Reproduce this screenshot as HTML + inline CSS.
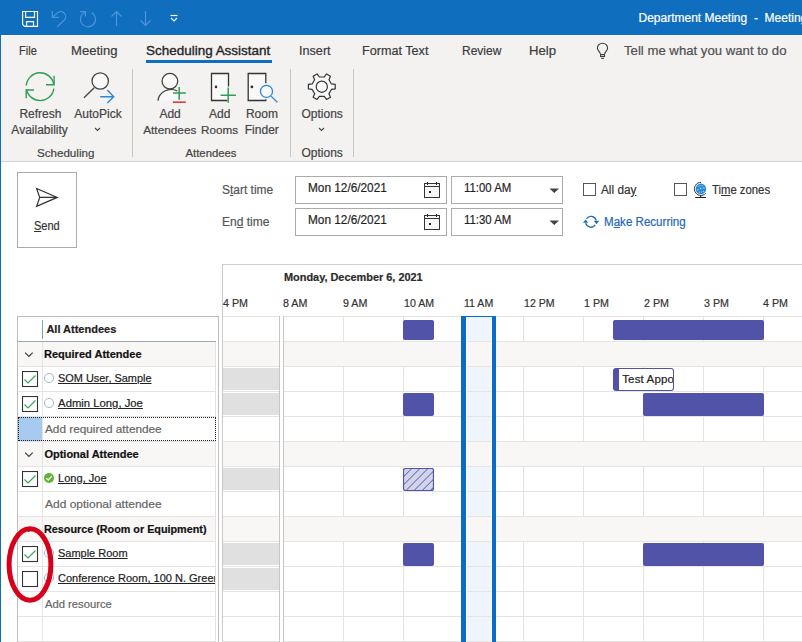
<!DOCTYPE html>
<html><head><meta charset="utf-8"><style>
html,body{margin:0;padding:0;}
body{width:802px;height:642px;overflow:hidden;position:relative;background:#fff;font-family:"Liberation Sans", sans-serif;}
.t{position:absolute;white-space:nowrap;line-height:1;-webkit-text-stroke-width:0.2px;}
.r{position:absolute;}
</style></head><body>
<div class="r" style="left:0px;top:0px;width:802px;height:35px;background:#106EBE"></div><div class="r" style="left:0px;top:35px;width:1px;height:607px;background:#106EBE"></div><div class="r" style="left:1px;top:35px;width:801px;height:126px;background:#F3F2F1"></div><div class="r" style="left:1px;top:161px;width:801px;height:1px;background:#D6D4D2"></div><svg class="r" style="left:0;top:0" width="200" height="35" viewBox="0 0 200 35">
<g fill="none" stroke="#fff" stroke-width="1.15">
<path d="M22.6 11.5 H37.5 V26.4 H24.6 L22.6 24.4 Z"/>
<path d="M25.6 11.5 V17.4 H34.5 V11.5"/>
<path d="M26.6 26.4 V21.6 H33.5 V26.4"/>
</g>
<g fill="none" stroke="#4F93DA" stroke-width="1.2">
<path d="M52.3 11.1 V17.3 H58.8"/>
<path d="M52.6 17 L57.8 12.6 A4.9 4.9 0 0 1 64.2 20 L57.3 26.7"/>
<path d="M84.79 12.31 A7.6 7.6 0 1 0 91.8 12.62"/>
<path d="M80.2 11.6 H85.4 V16.6"/>
<path d="M116.5 26 v-14 M111.5 16.5 l5 -5 l5 5"/>
<path d="M145.5 11 v14 M140.5 20.5 l5 5 l5 -5"/>
</g>
<g fill="none" stroke="#fff" stroke-width="1.2">
<path d="M170.5 15.5 h7"/>
<path d="M171 18 l3 3 l3 -3"/>
</g>
</svg><div class="t" style="left:638.5px;top:12.0px;font-size:12px;color:#fff;font-weight:normal;">Department Meeting&nbsp;&nbsp;-&nbsp;&nbsp;Meeting</div><div class="t" style="left:18.5px;top:44.0px;font-size:13px;color:#3b3b3b;font-weight:normal;transform:scaleX(0.850);transform-origin:0 0;">File</div><div class="t" style="left:70.5px;top:44.0px;font-size:13px;color:#3b3b3b;font-weight:normal;transform:scaleX(1.005);transform-origin:0 0;">Meeting</div><div class="t" style="left:146.0px;top:44.0px;font-size:13px;color:#262626;font-weight:normal;transform:scaleX(1.036);transform-origin:0 0;-webkit-text-stroke-width:0.35px;">Scheduling Assistant</div><div class="r" style="left:146px;top:60px;width:126px;height:3px;background:#106EBE"></div><div class="t" style="left:299.0px;top:44.0px;font-size:13px;color:#3b3b3b;font-weight:normal;transform:scaleX(0.972);transform-origin:0 0;">Insert</div><div class="t" style="left:362.0px;top:44.0px;font-size:13px;color:#3b3b3b;font-weight:normal;transform:scaleX(0.971);transform-origin:0 0;">Format Text</div><div class="t" style="left:461.6px;top:44.0px;font-size:13px;color:#3b3b3b;font-weight:normal;transform:scaleX(0.924);transform-origin:0 0;">Review</div><div class="t" style="left:529.0px;top:44.0px;font-size:13px;color:#3b3b3b;font-weight:normal;transform:scaleX(1.010);transform-origin:0 0;">Help</div><div class="t" style="left:624.3px;top:44.0px;font-size:13px;color:#505050;font-weight:normal;transform:scaleX(1.013);transform-origin:0 0;">Tell me what you want to do</div><svg class="r" style="left:590px;top:38px" width="24" height="26" viewBox="590 38 24 26">
<g fill="none" stroke="#3a3a3a" stroke-width="1.1">
<path d="M600.4 54 C600 51.6 597.4 50.6 597.4 48.3 A5.1 5.1 0 0 1 607.6 48.3 C607.6 50.6 605 51.6 604.6 54"/>
<rect x="600.6" y="54.6" width="3.9" height="1.9"/>
<path d="M601.3 58.4 H603.8"/>
</g></svg><div class="r" style="left:132px;top:69px;width:1px;height:88px;background:#C8C6C4"></div><div class="r" style="left:290px;top:69px;width:1px;height:88px;background:#C8C6C4"></div><div class="r" style="left:353px;top:69px;width:1px;height:88px;background:#C8C6C4"></div><div class="t" style="left:-19.6px;width:120px;text-align:center;top:108px;font-size:12px;color:#444;font-weight:normal">Refresh</div><div class="t" style="left:-20.4px;width:120px;text-align:center;top:124px;font-size:12px;color:#444;font-weight:normal">Availability</div><div class="t" style="left:38.0px;width:120px;text-align:center;top:108px;font-size:12px;color:#444;font-weight:normal">AutoPick</div><div class="t" style="left:5.7px;width:120px;text-align:center;top:147px;font-size:11.6px;color:#444;font-weight:normal">Scheduling</div><div class="t" style="left:110.1px;width:120px;text-align:center;top:108px;font-size:12px;color:#444;font-weight:normal">Add</div><div class="t" style="left:109.8px;width:120px;text-align:center;top:125px;font-size:11.8px;color:#444;font-weight:normal">Attendees</div><div class="t" style="left:159.8px;width:120px;text-align:center;top:108px;font-size:12px;color:#444;font-weight:normal">Add</div><div class="t" style="left:159.5px;width:120px;text-align:center;top:124px;font-size:11.7px;color:#444;font-weight:normal">Rooms</div><div class="t" style="left:201.9px;width:120px;text-align:center;top:108px;font-size:12px;color:#444;font-weight:normal">Room</div><div class="t" style="left:201.8px;width:120px;text-align:center;top:124px;font-size:12px;color:#444;font-weight:normal">Finder</div><div class="t" style="left:151.0px;width:120px;text-align:center;top:148px;font-size:11.3px;color:#444;font-weight:normal">Attendees</div><div class="t" style="left:262.2px;width:120px;text-align:center;top:108px;font-size:12px;color:#444;font-weight:normal">Options</div><div class="t" style="left:262.2px;width:120px;text-align:center;top:147px;font-size:12px;color:#444;font-weight:normal">Options</div><svg class="r" style="left:0;top:60px" width="360" height="80" viewBox="0 60 360 80">
<g fill="none" stroke="#2F9E52" stroke-width="1.4">
<path d="M26.25 85.49 A13.9 13.9 0 0 1 53.79 84.29"/>
<path d="M46 84.7 H54.1 V75.7"/>
<path d="M53.86 88.63 A13.9 13.9 0 0 1 26.41 89.11"/>
<path d="M34 90 H26.2 V98.2"/>
</g>
<g stroke="#444" stroke-width="1.3">
<circle cx="100.2" cy="81" r="8.2" fill="#F9F9F9"/>
<path d="M94.2 87.8 L84 97.8" fill="none"/>
</g>
<g fill="none" stroke="#2B88D8" stroke-width="1.4">
<path d="M100.2 96.7 H113.5 M107.3 90 L113.7 96.7 L107.3 103"/>
</g>

<g fill="none" stroke="#444" stroke-width="1.1">
<path d="M95 128 l2.5 2.5 l2.5 -2.5"/>
<path d="M319 128 l2.5 2.5 l2.5 -2.5"/>
</g>
<!-- add attendees -->
<path d="M158.1 100.8 A13 12 0 0 1 177.3 91 L178 100.8 Z" fill="#F9F9F9" stroke="none"/>
<g stroke="#444" stroke-width="1.3" fill="#F9F9F9">
<path d="M158.1 100.8 A13 12 0 0 1 177.3 91" fill="none"/>
<circle cx="169.9" cy="81.2" r="7.8"/>
</g>
<g stroke="#2F9E52" stroke-width="1.5"><path d="M179.2 87.1 V99.7 M172.9 93.1 H185.8"/></g>
<g stroke="#E03A3A" stroke-width="1.6"><path d="M172.9 102.2 H185.8"/></g>
<!-- add rooms -->
<rect x="211.5" y="73.5" width="17" height="27" fill="#F9F9F9"/>
<g stroke="#333" stroke-width="1.3" fill="none">
<path d="M228.5 86.5 V73.5 H211.5 V100.5 H227.4"/>
</g>
<circle cx="216" cy="86.9" r="1.3" fill="#333"/>
<g stroke="#2F9E52" stroke-width="1.5"><path d="M228.2 87.6 V102.8 M220.5 95.2 H235.9"/></g>
<!-- room finder -->
<rect x="248.2" y="73.5" width="17.6" height="27" fill="#F9F9F9"/>
<g stroke="#333" stroke-width="1.3" fill="none">
<path d="M265.8 99.2 V100.5 H248.2 V73.5 H265.8 V83.2"/>
</g>
<circle cx="251.9" cy="86.9" r="1.4" fill="#333"/>
<circle cx="266.5" cy="91.4" r="6.6" fill="#F9F9F9" stroke="#F3F2F1" stroke-width="2.2"/>
<g stroke="#2B88D8" stroke-width="1.3" fill="none">
<circle cx="266.5" cy="91.4" r="6"/>
<path d="M271 96.1 L277.3 102.3"/>
</g>
<!-- gear -->
<g stroke="#333" stroke-width="1.2" fill="#F9F9F9">
<path d="M331.41 83.94 L335.21 84.46 L335.21 88.94 L331.41 89.46 L328.99 93.65 L330.45 97.19 L326.56 99.44 L324.22 96.40 L319.38 96.40 L317.04 99.44 L313.15 97.19 L314.61 93.65 L312.19 89.46 L308.39 88.94 L308.39 84.46 L312.19 83.94 L314.61 79.75 L313.15 76.21 L317.04 73.96 L319.38 77.00 L324.22 77.00 L326.56 73.96 L330.45 76.21 L328.99 79.75 Z" stroke-linejoin="round"/>
<circle cx="321.8" cy="86.7" r="5.6"/>
</g>
</svg><div class="r" style="left:1px;top:162px;width:801px;height:480px;background:#fff"></div><div class="r" style="left:17px;top:172px;width:60px;height:76px;border:1px solid #ABABAB;box-sizing:border-box"></div><svg class="r" style="left:30px;top:185px" width="34" height="26" viewBox="30 185 34 26">
<path d="M36.6 188.5 L57.3 197.4 L36.6 206.3 L39.7 197.4 Z M39.7 197.4 H57.3" fill="#fafafa" stroke="#333" stroke-width="1.2" stroke-linejoin="miter"/>
</svg><div class="t" style="left:34.0px;top:220.0px;font-size:12px;color:#333;font-weight:normal;transform:scaleX(0.917);transform-origin:0 0;"><u>S</u>end</div><div class="t" style="left:221.8px;top:184.0px;font-size:12px;color:#555;font-weight:normal;transform:scaleX(0.997);transform-origin:0 0;">S<u>t</u>art time</div><div class="t" style="left:221.8px;top:216.0px;font-size:12px;color:#555;font-weight:normal;transform:scaleX(1.001);transform-origin:0 0;">En<u>d</u> time</div><div class="r" style="left:295px;top:176px;width:152px;height:28px;border:1px solid #ABABAB;box-sizing:border-box"></div><div class="r" style="left:451px;top:176px;width:112px;height:28px;border:1px solid #ABABAB;box-sizing:border-box"></div><svg class="r" style="left:420px;top:176px" width="24" height="28" viewBox="420 176 24 28">
<rect x="424.5" y="183.5" width="15" height="14" fill="#F6F6F6" stroke="#333" stroke-width="1"/>
<path d="M424.5 186.5 H439.5 M427.5 182 V185 M436.5 182 V185" stroke="#333" stroke-width="1" fill="none"/>
<rect x="429" y="191" width="2" height="2" fill="#222"/></svg><svg class="r" style="left:549px;top:188px" width="11" height="6" viewBox="0 0 11 6"><path d="M0.5 0.5 H10 L5.25 5 Z" fill="#444"/></svg><div class="r" style="left:295px;top:208px;width:152px;height:28px;border:1px solid #ABABAB;box-sizing:border-box"></div><div class="r" style="left:451px;top:208px;width:112px;height:28px;border:1px solid #ABABAB;box-sizing:border-box"></div><svg class="r" style="left:420px;top:208px" width="24" height="28" viewBox="420 208 24 28">
<rect x="424.5" y="215.5" width="15" height="14" fill="#F6F6F6" stroke="#333" stroke-width="1"/>
<path d="M424.5 218.5 H439.5 M427.5 214 V217 M436.5 214 V217" stroke="#333" stroke-width="1" fill="none"/>
<rect x="429" y="223" width="2" height="2" fill="#222"/></svg><svg class="r" style="left:549px;top:220px" width="11" height="6" viewBox="0 0 11 6"><path d="M0.5 0.5 H10 L5.25 5 Z" fill="#444"/></svg><div class="t" style="left:308.2px;top:182.0px;font-size:12.5px;color:#1f1f1f;font-weight:normal;transform:scaleX(0.945);transform-origin:0 0;">Mon 12/6/2021</div><div class="t" style="left:308.2px;top:214.0px;font-size:12.5px;color:#1f1f1f;font-weight:normal;transform:scaleX(0.945);transform-origin:0 0;">Mon 12/6/2021</div><div class="t" style="left:464.3px;top:182.0px;font-size:12.5px;color:#1f1f1f;font-weight:normal;transform:scaleX(0.910);transform-origin:0 0;">11:00 AM</div><div class="t" style="left:464.3px;top:214.0px;font-size:12.5px;color:#1f1f1f;font-weight:normal;transform:scaleX(0.910);transform-origin:0 0;">11:30 AM</div><div class="r" style="left:583px;top:183px;width:13px;height:13px;border:1px solid #555;box-sizing:border-box"></div><div class="t" style="left:601.4px;top:184.0px;font-size:12.5px;color:#333;font-weight:normal;transform:scaleX(0.944);transform-origin:0 0;">All da<u>y</u></div><div class="r" style="left:674px;top:183px;width:13px;height:13px;border:1px solid #555;box-sizing:border-box"></div><svg class="r" style="left:690px;top:178px" width="20" height="24" viewBox="690 178 20 24">
<circle cx="700.9" cy="188.9" r="5.3" fill="#2A8AD6"/>
<g fill="#cfe4f7"><rect x="700" y="187.8" width="1.3" height="1.3"/><rect x="697.3" y="189.2" width="1" height="1.3"/><rect x="703.4" y="187.4" width="1" height="1.3"/><rect x="697.6" y="185.9" width="0.9" height="0.9"/><rect x="699.6" y="185.2" width="0.9" height="0.9"/><rect x="701.8" y="185.3" width="0.9" height="0.9"/><rect x="699" y="191.8" width="0.9" height="0.9"/><rect x="701.2" y="191.6" width="0.9" height="0.9"/><rect x="703.2" y="190.9" width="0.9" height="0.9"/></g>
<path d="M701 182.3 A6.6 6.6 0 1 0 705.8 193.4" stroke="#333" stroke-width="1" fill="none"/>
<path d="M700.7 195.3 V197.5 M695.2 197.5 H706" stroke="#222" stroke-width="1.1" fill="none"/>
</svg><div class="t" style="left:712.2px;top:184.0px;font-size:12.5px;color:#333;font-weight:normal;transform:scaleX(0.905);transform-origin:0 0;">Ti<u>m</u>e zones</div><svg class="r" style="left:580px;top:211px" width="22" height="22" viewBox="580 211 22 22">
<g fill="none" stroke="#1F6BC2" stroke-width="1.3">
<path d="M586.48 218.7 A5.4 5.4 0 0 1 596.12 220.4"/>
<path d="M595.32 224.9 A5.4 5.4 0 0 1 585.68 223.2"/>
</g>
<path d="M593.8 220.8 H599.2 L596.5 224.2 Z M582.9 222.8 H588.3 L585.6 219.4 Z" fill="#1F6BC2"/></svg><div class="t" style="left:603.7px;top:216.0px;font-size:12.5px;color:#2566B8;font-weight:normal;transform:scaleX(0.926);transform-origin:0 0;">M<u>a</u>ke Recurring</div><div class="r" style="left:222px;top:264px;width:580px;height:1px;background:#CFCFCF"></div><div class="r" style="left:222px;top:264px;width:1px;height:378px;background:#C8C8C8"></div><div class="t" style="left:283.5px;top:272.0px;font-size:11px;color:#2b2b2b;font-weight:bold;transform:scaleX(0.992);transform-origin:0 0;">Monday, December 6, 2021</div><div class="t" style="left:223.2px;top:298.0px;font-size:11.5px;color:#333;font-weight:normal;transform:scaleX(0.931);transform-origin:0 0;">4 PM</div><div class="t" style="left:283.0px;top:298.0px;font-size:11.5px;color:#333;font-weight:normal;transform:scaleX(0.931);transform-origin:0 0;">8 AM</div><div class="t" style="left:343.0px;top:298.0px;font-size:11.5px;color:#333;font-weight:normal;transform:scaleX(0.931);transform-origin:0 0;">9 AM</div><div class="t" style="left:403.8px;top:298.0px;font-size:11.5px;color:#333;font-weight:normal;transform:scaleX(0.921);transform-origin:0 0;">10 AM</div><div class="t" style="left:463.6px;top:298.0px;font-size:11.5px;color:#333;font-weight:normal;transform:scaleX(0.921);transform-origin:0 0;">11 AM</div><div class="t" style="left:523.5px;top:298.0px;font-size:11.5px;color:#333;font-weight:normal;transform:scaleX(0.921);transform-origin:0 0;">12 PM</div><div class="t" style="left:583.5px;top:298.0px;font-size:11.5px;color:#333;font-weight:normal;transform:scaleX(0.931);transform-origin:0 0;">1 PM</div><div class="t" style="left:643.5px;top:298.0px;font-size:11.5px;color:#333;font-weight:normal;transform:scaleX(0.931);transform-origin:0 0;">2 PM</div><div class="t" style="left:703.5px;top:298.0px;font-size:11.5px;color:#333;font-weight:normal;transform:scaleX(0.931);transform-origin:0 0;">3 PM</div><div class="t" style="left:763.0px;top:298.0px;font-size:11.5px;color:#333;font-weight:normal;transform:scaleX(0.931);transform-origin:0 0;">4 PM</div><div class="r" style="left:343px;top:316px;width:1px;height:326px;background:#E3E3E3"></div><div class="r" style="left:403px;top:316px;width:1px;height:326px;background:#E3E3E3"></div><div class="r" style="left:463px;top:316px;width:1px;height:326px;background:#E3E3E3"></div><div class="r" style="left:523px;top:316px;width:1px;height:326px;background:#E3E3E3"></div><div class="r" style="left:583px;top:316px;width:1px;height:326px;background:#E3E3E3"></div><div class="r" style="left:643px;top:316px;width:1px;height:326px;background:#E3E3E3"></div><div class="r" style="left:703px;top:316px;width:1px;height:326px;background:#E3E3E3"></div><div class="r" style="left:763px;top:316px;width:1px;height:326px;background:#E3E3E3"></div><div class="r" style="left:467px;top:317px;width:24px;height:325px;background:#EEF5FC"></div><div class="r" style="left:223px;top:316px;width:579px;height:1px;background:#E6E4E2"></div><div class="r" style="left:223px;top:341px;width:579px;height:1px;background:#E6E4E2"></div><div class="r" style="left:223px;top:366px;width:579px;height:1px;background:#E6E4E2"></div><div class="r" style="left:223px;top:391px;width:579px;height:1px;background:#E6E4E2"></div><div class="r" style="left:223px;top:416px;width:579px;height:1px;background:#E6E4E2"></div><div class="r" style="left:223px;top:441px;width:579px;height:1px;background:#E6E4E2"></div><div class="r" style="left:223px;top:466px;width:579px;height:1px;background:#E6E4E2"></div><div class="r" style="left:223px;top:491px;width:579px;height:1px;background:#E6E4E2"></div><div class="r" style="left:223px;top:516px;width:579px;height:1px;background:#E6E4E2"></div><div class="r" style="left:223px;top:541px;width:579px;height:1px;background:#E6E4E2"></div><div class="r" style="left:223px;top:566px;width:579px;height:1px;background:#E6E4E2"></div><div class="r" style="left:223px;top:591px;width:579px;height:1px;background:#E6E4E2"></div><div class="r" style="left:223px;top:616px;width:579px;height:1px;background:#E6E4E2"></div><div class="r" style="left:223px;top:641px;width:579px;height:1px;background:#E6E4E2"></div><div class="r" style="left:223px;top:342px;width:579px;height:24px;background:#F8F7F6"></div><div class="r" style="left:223px;top:442px;width:579px;height:24px;background:#F8F7F6"></div><div class="r" style="left:223px;top:517px;width:579px;height:24px;background:#F8F7F6"></div><div class="r" style="left:223px;top:368px;width:56px;height:22px;background:#E0E0E0"></div><div class="r" style="left:223px;top:393px;width:56px;height:22px;background:#E0E0E0"></div><div class="r" style="left:223px;top:468px;width:56px;height:22px;background:#E0E0E0"></div><div class="r" style="left:223px;top:543px;width:56px;height:22px;background:#E0E0E0"></div><div class="r" style="left:223px;top:568px;width:56px;height:22px;background:#E0E0E0"></div><div class="r" style="left:279px;top:316px;width:1px;height:326px;background:#C6C6C6"></div><div class="r" style="left:280px;top:316px;width:3px;height:326px;background:#fff"></div><div class="r" style="left:283px;top:316px;width:1px;height:326px;background:#C6C6C6"></div><div class="r" style="left:461px;top:316px;width:5px;height:326px;background:#0A6CC6"></div><div class="r" style="left:466px;top:316px;width:1px;height:326px;background:#fff"></div><div class="r" style="left:491px;top:316px;width:1px;height:326px;background:#fff"></div><div class="r" style="left:492px;top:316px;width:4px;height:326px;background:#0A6CC6"></div><div class="r" style="left:461px;top:316px;width:35px;height:1px;background:#0A6CC6"></div><div class="r" style="left:403px;top:320px;width:31px;height:20px;background:#5053A7;border-radius:2px;"></div><div class="r" style="left:613px;top:320px;width:151px;height:20px;background:#5053A7;border-radius:2px;"></div><div class="r" style="left:403px;top:393px;width:31px;height:23px;background:#5053A7;border-radius:2px;"></div><div class="r" style="left:643px;top:393px;width:121px;height:23px;background:#5053A7;border-radius:2px;"></div><div class="r" style="left:403px;top:543px;width:31px;height:23px;background:#5053A7;border-radius:2px;"></div><div class="r" style="left:643px;top:543px;width:121px;height:23px;background:#5053A7;border-radius:2px;"></div><div class="r" style="left:613px;top:368px;width:61px;height:23px;border:1px solid #5053A7;border-left:6px solid #5053A7;border-radius:3px;background:#fff;box-sizing:border-box;overflow:hidden"></div><div class="r" style="left:619px;top:369px;width:54px;height:21px;overflow:hidden"><div class="t" style="left:3.2px;top:5px;font-size:11.5px;color:#222;letter-spacing:0.15px">Test Appointment</div></div><svg class="r" style="left:403px;top:468px" width="31" height="23" viewBox="0 0 31 23">
<defs><clipPath id="hc"><rect x="0.5" y="0.5" width="30" height="22" rx="2"/></clipPath></defs>
<rect x="0.5" y="0.5" width="30" height="22" rx="2" fill="#D2D4EA"/>
<path d="M1.20 0 L-21.80 23 M9.30 0 L-13.70 23 M17.40 0 L-5.60 23 M25.50 0 L2.50 23 M33.60 0 L10.60 23 M41.70 0 L18.70 23 M49.80 0 L26.80 23 M57.90 0 L34.90 23 " stroke="#5053A7" stroke-width="1" clip-path="url(#hc)"/>
<rect x="0.5" y="0.5" width="30" height="22" rx="2" fill="none" stroke="#5053A7" stroke-width="1.2"/>
</svg><div class="r" style="left:17px;top:316px;width:202px;height:326px;border:1px solid #BDBDBD;border-bottom:none;box-sizing:border-box;background:#fff"></div><div class="r" style="left:18px;top:516px;width:198px;height:25px;background:#F8F7F6"></div><div class="r" style="left:18px;top:341px;width:198px;height:25px;background:#F8F7F6"></div><div class="r" style="left:18px;top:441px;width:198px;height:25px;background:#F8F7F6"></div><div class="r" style="left:18px;top:341px;width:198px;height:1px;background:#E6E4E2"></div><div class="r" style="left:18px;top:366px;width:198px;height:1px;background:#E6E4E2"></div><div class="r" style="left:18px;top:391px;width:198px;height:1px;background:#E6E4E2"></div><div class="r" style="left:18px;top:416px;width:198px;height:1px;background:#E6E4E2"></div><div class="r" style="left:18px;top:441px;width:198px;height:1px;background:#E6E4E2"></div><div class="r" style="left:18px;top:466px;width:198px;height:1px;background:#E6E4E2"></div><div class="r" style="left:18px;top:491px;width:198px;height:1px;background:#E6E4E2"></div><div class="r" style="left:18px;top:516px;width:198px;height:1px;background:#E6E4E2"></div><div class="r" style="left:18px;top:541px;width:198px;height:1px;background:#E6E4E2"></div><div class="r" style="left:18px;top:566px;width:198px;height:1px;background:#E6E4E2"></div><div class="r" style="left:18px;top:591px;width:198px;height:1px;background:#E6E4E2"></div><div class="r" style="left:18px;top:616px;width:198px;height:1px;background:#E6E4E2"></div><div class="r" style="left:18px;top:641px;width:198px;height:1px;background:#E6E4E2"></div><div class="r" style="left:18px;top:341px;width:198px;height:1px;background:#9BA7B8"></div><div class="r" style="left:42px;top:320px;width:1px;height:19px;background:#8C9AAE"></div><div class="r" style="left:42px;top:342px;width:1px;height:300px;background:#E6E4E2"></div><div class="r" style="left:215px;top:342px;width:1px;height:300px;background:#E6E4E2"></div><div class="t" style="left:46.4px;top:324.0px;font-size:11px;color:#222;font-weight:bold;">All Attendees</div><div class="t" style="left:44.4px;top:349.0px;font-size:11px;color:#111;font-weight:bold;transform:scaleX(1.002);transform-origin:0 0;">Required Attendee</div><svg class="r" style="left:24px;top:351px" width="11" height="7" viewBox="0 0 11 7"><path d="M1.1 1.7 L4.9 5.5 L8.7 1.7" fill="none" stroke="#3a3a3a" stroke-width="1.15"/></svg><div class="t" style="left:44.4px;top:449.0px;font-size:11px;color:#111;font-weight:bold;transform:scaleX(1.000);transform-origin:0 0;">Optional Attendee</div><svg class="r" style="left:24px;top:451px" width="11" height="7" viewBox="0 0 11 7"><path d="M1.1 1.7 L4.9 5.5 L8.7 1.7" fill="none" stroke="#3a3a3a" stroke-width="1.15"/></svg><div class="t" style="left:44.4px;top:524.0px;font-size:11px;color:#111;font-weight:bold;transform:scaleX(0.981);transform-origin:0 0;">Resource (Room or Equipment)</div><svg class="r" style="left:24px;top:526px" width="11" height="7" viewBox="0 0 11 7"><path d="M1.1 1.7 L4.9 5.5 L8.7 1.7" fill="none" stroke="#3a3a3a" stroke-width="1.15"/></svg><svg class="r" style="left:22px;top:371px" width="17" height="17" viewBox="0 0 17 17"><rect x="0.5" y="0.5" width="15" height="15" fill="#fff" stroke="#333" stroke-width="1.1"/><path d="M2.5 8.5 L6 12 L13.5 4.5" fill="none" stroke="#3AA757" stroke-width="1.2"/></svg><svg class="r" style="left:43px;top:372px" width="12" height="12" viewBox="0 0 12 12"><circle cx="6" cy="6" r="4.6" fill="#fff" stroke="#A8B8C8" stroke-width="1"/></svg><div class="r" style="left:58px;top:366px;width:157px;height:25px;overflow:hidden"><div class="t" style="left:0.1px;top:7px;font-size:11.3px;color:#222;text-decoration:underline;transform:scaleX(0.967);transform-origin:0 0">SOM User, Sample</div></div><svg class="r" style="left:22px;top:396px" width="17" height="17" viewBox="0 0 17 17"><rect x="0.5" y="0.5" width="15" height="15" fill="#fff" stroke="#333" stroke-width="1.1"/><path d="M2.5 8.5 L6 12 L13.5 4.5" fill="none" stroke="#3AA757" stroke-width="1.2"/></svg><svg class="r" style="left:43px;top:397px" width="12" height="12" viewBox="0 0 12 12"><circle cx="6" cy="6" r="4.6" fill="#fff" stroke="#A8B8C8" stroke-width="1"/></svg><div class="r" style="left:58px;top:391px;width:157px;height:25px;overflow:hidden"><div class="t" style="left:0.1px;top:7px;font-size:11.3px;color:#222;text-decoration:underline;transform:scaleX(1.0);transform-origin:0 0">Admin Long, Joe</div></div><svg class="r" style="left:22px;top:471px" width="17" height="17" viewBox="0 0 17 17"><rect x="0.5" y="0.5" width="15" height="15" fill="#fff" stroke="#333" stroke-width="1.1"/><path d="M2.5 8.5 L6 12 L13.5 4.5" fill="none" stroke="#3AA757" stroke-width="1.2"/></svg><svg class="r" style="left:43px;top:472px" width="12" height="12" viewBox="0 0 12 12"><circle cx="6" cy="6" r="5" fill="#5BB62E"/><path d="M3.3 6.2 L5.2 8 L8.7 4.3" fill="none" stroke="#fff" stroke-width="1.3"/></svg><div class="r" style="left:58px;top:466px;width:157px;height:25px;overflow:hidden"><div class="t" style="left:0.1px;top:7px;font-size:11.3px;color:#222;text-decoration:underline;transform:scaleX(0.98);transform-origin:0 0">Long, Joe</div></div><svg class="r" style="left:22px;top:546px" width="17" height="17" viewBox="0 0 17 17"><rect x="0.5" y="0.5" width="15" height="15" fill="#fff" stroke="#333" stroke-width="1.1"/><path d="M2.5 8.5 L6 12 L13.5 4.5" fill="none" stroke="#3AA757" stroke-width="1.2"/></svg><svg class="r" style="left:43px;top:547px" width="12" height="12" viewBox="0 0 12 12"><circle cx="6" cy="6" r="4.6" fill="#fff" stroke="#A8B8C8" stroke-width="1"/></svg><div class="r" style="left:58px;top:541px;width:157px;height:25px;overflow:hidden"><div class="t" style="left:0.1px;top:7px;font-size:11.3px;color:#222;text-decoration:underline;transform:scaleX(0.972);transform-origin:0 0">Sample Room</div></div><svg class="r" style="left:22px;top:571px" width="17" height="17" viewBox="0 0 17 17"><rect x="0.5" y="0.5" width="15" height="15" fill="#fff" stroke="#333" stroke-width="1.1"/></svg><svg class="r" style="left:43px;top:572px" width="12" height="12" viewBox="0 0 12 12"><circle cx="6" cy="6" r="4.6" fill="#fff" stroke="#A8B8C8" stroke-width="1"/></svg><div class="r" style="left:58px;top:566px;width:157px;height:25px;overflow:hidden"><div class="t" style="left:0.1px;top:7px;font-size:11.3px;color:#222;text-decoration:underline;transform:scaleX(0.975);transform-origin:0 0">Conference Room, 100 N. Greene St.</div></div><div class="t" style="left:44.5px;top:424.0px;font-size:11.5px;color:#666;font-weight:normal;transform:scaleX(1.025);transform-origin:0 0;">Add required attendee</div><div class="t" style="left:44.5px;top:499.0px;font-size:11.5px;color:#666;font-weight:normal;transform:scaleX(1.042);transform-origin:0 0;">Add optional attendee</div><div class="t" style="left:44.5px;top:599.0px;font-size:11.5px;color:#666;font-weight:normal;transform:scaleX(0.977);transform-origin:0 0;">Add resource</div><div class="r" style="left:18px;top:417px;width:24px;height:24px;background:#A6CBEE"></div><div class="r" style="left:18px;top:417px;width:198px;height:24px;border:1px dotted #222;box-sizing:border-box"></div><svg class="r" style="left:0;top:520px" width="60" height="90" viewBox="0 520 60 90">
<ellipse cx="30" cy="564.5" rx="20.9" ry="35.7" fill="none" stroke="#D7001A" stroke-width="5"/>
</svg>
</body></html>
